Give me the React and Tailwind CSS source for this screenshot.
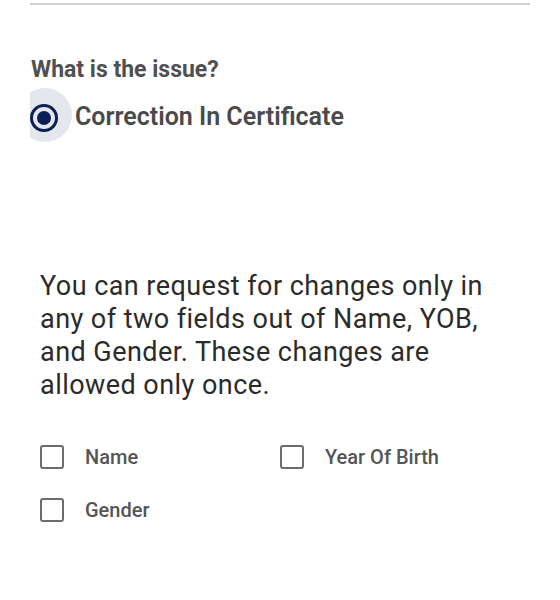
export default function App() {
  const fields = ['Name', 'Year Of Birth', 'Gender']

  return (
    <div className="w-[560px] h-[600px] bg-white overflow-hidden font-['Roboto',sans-serif]">
      <div className="mx-[30px] border-t-2 border-[#cfcfcf] mt-[3px]" />

      <div className="pl-[31px] pr-6 pt-[51px]">
        <h2 className="text-[23px] font-bold text-[#505050] leading-7">What is the issue?</h2>

        {/* radio, with its focus ripple clipped on the left */}
        <div className="flex items-center -ml-px mt-[4px] h-[54px]">
          <div className="relative w-[43px] h-[54px] overflow-hidden shrink-0">
            <div className="absolute -left-[12px] top-0 w-[54px] h-[54px] rounded-full bg-[#e4e7ee]" />
            <div className="absolute left-0 top-[16px] w-7 h-7 rounded-full border-[3px] border-[#0d1f57] flex items-center justify-center">
              <div className="w-[14px] h-[14px] rounded-full bg-[#0d1f57]" />
            </div>
          </div>
          <span className="text-[25px] font-semibold text-[#4a4a4a] ml-[2px] mt-[3px]">Correction In Certificate</span>
        </div>
      </div>

      <p className="pl-10 w-[492px] mt-[128px] text-[27px] leading-[33px] tracking-[0.45px] text-[#2b2b2b]">
        You can request for changes only in any of two fields out of Name, YOB, and Gender. These changes are allowed only once.
      </p>

      <div className="grid grid-cols-[240px_240px] px-10 mt-[43px] gap-y-[29px]">
        {fields.map((f) => (
          <label key={f} className="flex items-center gap-[21px] h-6">
            <span className="w-6 h-6 rounded-[3px] border-[2.5px] border-[#6b6b6b] shrink-0" />
            <span className="text-[20px] font-medium text-[#555555]">{f}</span>
          </label>
        ))}
      </div>
    </div>
  )
}
